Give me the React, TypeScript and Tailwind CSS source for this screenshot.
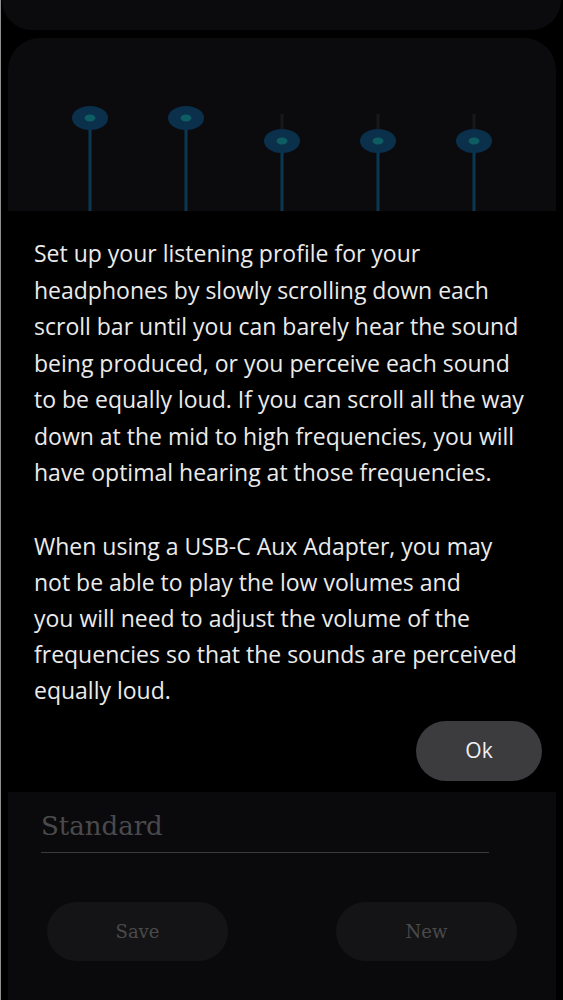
import React from 'react'

// EQ band levels — knob centre, measured from the top of the slider panel
const BANDS = [80, 80, 103, 103, 103]

const BODY_FONT = { fontFamily: '"Open Sans", "Noto Sans", sans-serif' }
const SERIF_FONT = { fontFamily: '"DejaVu Serif", "Liberation Serif", serif' }

const INTRO = [
  'Set up your listening profile for your',
  'headphones by slowly scrolling down each',
  'scroll bar until you can barely hear the sound',
  'being produced, or you perceive each sound',
  'to be equally loud. If you can scroll all the way',
  'down at the mid to high frequencies, you will',
  'have optimal hearing at those frequencies.',
]

const ADAPTER_NOTE = [
  'When using a USB-C Aux Adapter, you may',
  'not be able to play the low volumes and',
  'you will need to adjust the volume of the',
  'frequencies so that the sounds are perceived',
  'equally loud.',
]

function BandSlider({ knobY }: { knobY: number }) {
  return (
    <svg width="40" height="173" viewBox="0 0 40 173" className="shrink-0">
      <line x1="20" y1="76" x2="20" y2={knobY} stroke="#18181a" strokeWidth="3" />
      <line x1="20" y1={knobY} x2="20" y2="173" stroke="#0a3852" strokeWidth="3" />
      <ellipse cx="20" cy={knobY} rx="18" ry="12" fill="#0b304c" />
      <ellipse cx="20" cy={knobY} rx="5.5" ry="3.5" fill="#0e5d62" />
    </svg>
  )
}

export default function App() {
  return (
    <div className="h-[1000px] bg-black border-l border-[#8e8e8e] overflow-hidden flex flex-col">

      {/* Previous card, mostly scrolled off */}
      <div className="h-[30px] ml-[1px] mr-[2px] rounded-b-[30px] bg-[#0b0b0d] shrink-0" />

      {/* Equalizer panel */}
      <div className="mt-[8px] mx-[7px] h-[173px] rounded-t-[32px] bg-[#0b0b0d] shrink-0 flex pl-[62px] gap-[56px]">
        {BANDS.map((y, i) => <BandSlider key={i} knobY={y} />)}
      </div>

      {/* Help dialog */}
      <div className="h-[579px] bg-black shrink-0 flex flex-col pl-[33px] pr-[21px] pt-[24px]" style={BODY_FONT}>
        <p className="text-[23px] leading-[36.5px] text-[#ebebeb] whitespace-nowrap">
          {INTRO.map(line => <span key={line} className="block">{line}</span>)}
        </p>
        <p className="mt-[37px] text-[23px] leading-[36px] text-[#ebebeb] whitespace-nowrap">
          {ADAPTER_NOTE.map(line => <span key={line} className="block">{line}</span>)}
        </p>
        <div className="flex justify-end mt-[13px]">
          <button className="w-[126px] h-[60px] rounded-full bg-[#3c3b3e] text-[21px] text-[#f0f0f0]">Ok</button>
        </div>
      </div>

      {/* Profile name + actions */}
      <div className="mt-[2px] mx-[7px] flex-1 bg-[#0a0a0c] pt-[16px]">
        <div className="ml-[33px] w-[448px] border-b border-[#3a3a3c] pb-[8px]">
          <p className="text-[26px] leading-[36px] text-[#4a4a4d]" style={SERIF_FONT}>Standard</p>
        </div>
        <div className="flex justify-between pl-[39px] pr-[39px] mt-[49px]">
          <button className="w-[181px] h-[59px] rounded-full bg-[#141416] text-[18px] text-[#4a4a4c]" style={SERIF_FONT}>Save</button>
          <button className="w-[181px] h-[59px] rounded-full bg-[#141416] text-[18px] text-[#4a4a4c]" style={SERIF_FONT}>New</button>
        </div>
      </div>

    </div>
  )
}
